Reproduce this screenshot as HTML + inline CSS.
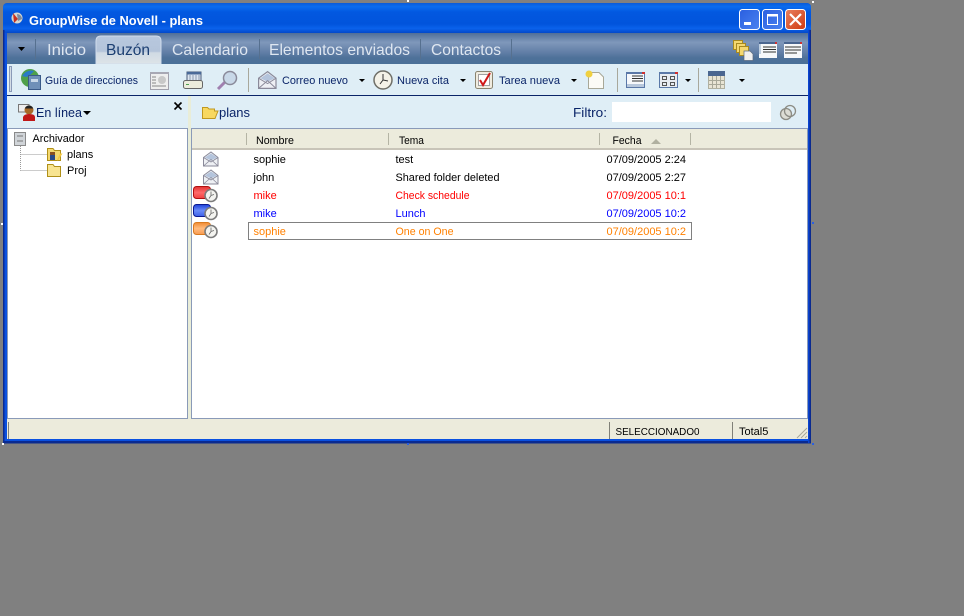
<!DOCTYPE html>
<html><head><meta charset="utf-8"><style>
html,body{margin:0;padding:0;background:#808080;width:964px;height:616px;overflow:hidden}
svg{display:block}
text{font-family:"Liberation Sans",sans-serif;font-size:11px}
</style></head><body>
<svg width="964" height="616" viewBox="0 0 964 616" xmlns="http://www.w3.org/2000/svg">
<defs>
<linearGradient id="tb" x1="0" y1="0" x2="0" y2="1">
<stop offset="0" stop-color="#0a5ad8"/><stop offset=".12" stop-color="#0a6cf0"/><stop offset=".3" stop-color="#0258e0"/><stop offset=".7" stop-color="#0154dc"/><stop offset=".85" stop-color="#0a62ec"/><stop offset="1" stop-color="#0348c8"/>
</linearGradient>
<linearGradient id="tabs" x1="0" y1="0" x2="0" y2="1">
<stop offset="0" stop-color="#4f6e98"/><stop offset=".3" stop-color="#7f98bb"/><stop offset=".6" stop-color="#6480a8"/><stop offset=".8" stop-color="#4e7199"/><stop offset="1" stop-color="#4a7098"/>
</linearGradient>
<linearGradient id="act" x1="0" y1="0" x2="0" y2="1">
<stop offset="0" stop-color="#b8c8de"/><stop offset=".55" stop-color="#b4c4da"/><stop offset=".6" stop-color="#d0dae4"/><stop offset="1" stop-color="#dde4e8"/>
</linearGradient>
<linearGradient id="btn" x1="0" y1="0" x2="1" y2="1"><stop offset="0" stop-color="#2a5fe0"/><stop offset="1" stop-color="#4a82f0"/></linearGradient>
<linearGradient id="cls" x1="0" y1="0" x2="1" y2="1"><stop offset="0" stop-color="#e88060"/><stop offset="1" stop-color="#d03a10"/></linearGradient>
<linearGradient id="red" x1="0" y1="0" x2="0" y2="1"><stop offset="0" stop-color="#e03030"/><stop offset=".5" stop-color="#ff6a6a"/><stop offset="1" stop-color="#f04040"/></linearGradient>
<linearGradient id="blu" x1="0" y1="0" x2="0" y2="1"><stop offset="0" stop-color="#1c40d8"/><stop offset=".5" stop-color="#6a8cf8"/><stop offset="1" stop-color="#3c60e8"/></linearGradient>
<linearGradient id="org" x1="0" y1="0" x2="0" y2="1"><stop offset="0" stop-color="#f08a30"/><stop offset=".5" stop-color="#ffbc80"/><stop offset="1" stop-color="#f89a50"/></linearGradient>
<g id="clock"><circle cx="0" cy="0" r="6" fill="#f4f4f0" stroke="#7c7c7c" stroke-width="1.6"/><path d="M0 -4V0L3 -1M0 0L-2 3" stroke="#666" fill="none" stroke-width=".8"/></g>
<g id="env"><path d="M0.5 6L8 0.5L15 6V14.5H0.5Z" fill="#eef0f4" stroke="#8a8a9a"/><path d="M2 6L8 2L14 6L8 9Z" fill="#b4c4dc"/><path d="M0.5 14.5L8 8L15 14.5M0.5 6L8 10.500L15 6" fill="none" stroke="#8a8a9a" stroke-width=".8"/></g>
<g id="arrow"><path d="M0 0H6L3 3Z" fill="#000"/></g>
</defs>

<rect width="964" height="616" fill="#808080"/>
<!-- window frame -->
<path d="M3 443V8Q3 3 9 3H806Q811 3 811 8V443Z" fill="#0a50e0"/>
<rect x="3" y="3" width="808" height="30" fill="url(#tb)" rx="4"/>
<rect x="3" y="441" width="808" height="2.500" fill="#0a2a90"/>
<rect x="3" y="439" width="808" height="2" fill="#0a50e0"/>
<rect x="808" y="30" width="3" height="413" fill="#0a44d0"/>
<rect x="3" y="30" width="1.500" height="413" fill="#0a2a90"/>
<rect x="809.500" y="30" width="1.500" height="413" fill="#0a2a90"/>
<rect x="2" y="443" width="2" height="2" fill="#fff"/>
<rect x="812" y="443" width="2" height="2" fill="#2a5fe0"/>
<rect x="407" y="443" width="2" height="2" fill="#2a5fe0"/>
<rect x="812" y="222" width="2" height="2" fill="#2a5fe0"/>
<rect x="1" y="223" width="2" height="2" fill="#fff"/>
<rect x="812" y="1" width="2" height="2" fill="#fff"/>
<rect x="407" y="0" width="2" height="2" fill="#fff"/>

<!-- title -->
<circle cx="17" cy="18" r="5.500" fill="#d8d8d0"/><path d="M13 13L18 19L14 23Z" fill="#c83020"/><path d="M17 14a5 5 0 0 1 5 5l-4 2Z" fill="#7a8aa0"/>
<text x="29" y="25" fill="#fff" font-weight="bold" style="font-size:13px" textLength="174" lengthAdjust="spacingAndGlyphs">GroupWise de Novell - plans</text>

<!-- window buttons -->
<rect x="739.500" y="9.500" width="20" height="20" rx="3" fill="url(#btn)" stroke="#fff"/><rect x="744" y="22" width="7" height="3" fill="#fff"/>
<rect x="762.500" y="9.500" width="20" height="20" rx="3" fill="url(#btn)" stroke="#fff"/><rect x="767.500" y="14.500" width="10" height="10" fill="none" stroke="#fff"/><rect x="767" y="14" width="11" height="2.500" fill="#fff"/>
<rect x="785.500" y="9.500" width="20" height="20" rx="3" fill="url(#cls)" stroke="#fff"/><path d="M790 14L801 25M801 14L790 25" stroke="#fff" stroke-width="2.200"/>

<!-- tab bar -->
<rect x="7" y="33" width="801" height="31" fill="url(#tabs)"/>
<path d="M18 47H25L21.500 51Z" fill="#000"/>
<g stroke="#56708f"><path d="M35.500 39V59M259.500 39V59M420.500 39V59M511.500 39V59"/></g>
<path d="M96 64V41Q96 36 101 36H156Q161 36 161 41V64Z" fill="url(#act)" stroke="#d0dcec" stroke-width="1"/>
<g fill="#dfe7f1">
<text x="47" y="55" style="font-size:16px" textLength="39" lengthAdjust="spacingAndGlyphs">Inicio</text>
<text x="106" y="55" style="font-size:16px" fill="#1c3f72" textLength="44" lengthAdjust="spacingAndGlyphs">Buzón</text>
<text x="172" y="55" style="font-size:16px" textLength="76" lengthAdjust="spacingAndGlyphs">Calendario</text>
<text x="269" y="55" style="font-size:16px" textLength="141" lengthAdjust="spacingAndGlyphs">Elementos enviados</text>
<text x="431" y="55" style="font-size:16px" textLength="70" lengthAdjust="spacingAndGlyphs">Contactos</text>
</g>
<!-- tab right icons -->
<g stroke="#a88a20" fill="#f4d870"><rect x="733.500" y="40.500" width="9" height="9"/><rect x="736.500" y="43.500" width="9" height="9"/><rect x="739.500" y="46.500" width="9" height="9"/></g>
<path d="M744 51H750L753 54V60.500H744Z" fill="#f0f0f0" stroke="#5a6a80" stroke-width=".7"/>
<g><rect x="759" y="44" width="18" height="14" fill="#f6f8fa"/><rect x="759" y="42" width="18" height="2" fill="#4a6690"/><rect x="775" y="42" width="2" height="2" fill="#d03030"/><path d="M763 47H776M763 49.500H776M763 52H776" stroke="#333"/><rect x="759" y="44" width="2" height="10" fill="#c0d0e0"/></g>
<g><rect x="784" y="44" width="18" height="14" fill="#f6f8fa"/><rect x="784" y="42" width="18" height="2" fill="#4a6690"/><rect x="800" y="42" width="2" height="2" fill="#d03030"/><path d="M785 47H801M785 50H801M785 53H797" stroke="#333"/></g>

<!-- toolbar and headers -->
<rect x="7" y="64" width="801" height="64" fill="#dfeef6"/>
<rect x="7" y="95" width="801" height="1" fill="#0a2468"/>
<rect x="9.500" y="66.500" width="2" height="25" fill="#d4dde6" stroke="#8a9ab8" stroke-width="1"/>
<!-- address book -->
<circle cx="30" cy="78" r="9" fill="#4fa04a"/><path d="M22 76Q27 69 34 71Q30 76 26 77Z" fill="#2a7ac8"/><rect x="28.500" y="75.500" width="12" height="14" fill="#6f90b8" stroke="#3a5a88"/><rect x="31" y="79" width="7" height="3" fill="#c8d8e8"/>
<text x="45" y="84" fill="#0a2468" textLength="93" lengthAdjust="spacingAndGlyphs">Guía de direcciones</text>
<!-- doc-view -->
<rect x="150.500" y="72.500" width="18" height="17" fill="#eee" stroke="#a0a0ac"/><rect x="150" y="72" width="19" height="2" fill="#a8a8b4"/><path d="M152 77H156M152 80H156M152 83H156M152 86H166" stroke="#888"/><circle cx="162" cy="80" r="4" fill="#c8c8c8"/>
<!-- printer -->
<rect x="187" y="72" width="14" height="9" fill="#dde6f0" stroke="#4a5a78"/><rect x="187" y="72" width="14" height="2.500" fill="#4a6a98"/><path d="M190 75V80M193 75V80M196 75V80M199 75V80" stroke="#8a9ab0"/><rect x="183.500" y="80.500" width="19" height="8" rx="2" fill="#ececdc" stroke="#666"/><rect x="186" y="84" width="3" height="1" fill="#50a050"/>
<!-- magnifier -->
<path d="M218 89L225 82" stroke="#a080b0" stroke-width="3"/><circle cx="230" cy="78" r="6.500" fill="#c8d8e8" stroke="#8a8a9a" stroke-width="1.500"/>
<rect x="248" y="68" width="1" height="24" fill="#a8a89c"/>
<!-- new mail -->
<g transform="translate(258 71) scale(1.2)"><use href="#env"/></g>
<text x="282" y="84" fill="#0a2468" textLength="66" lengthAdjust="spacingAndGlyphs">Correo nuevo</text>
<use href="#arrow" x="359" y="79"/>
<g transform="translate(383 80)"><circle r="9" fill="#f4f2e8" stroke="#6f6f68" stroke-width="1.500"/><path d="M0 -6V0L5 1M0 0L-3 4" stroke="#333" fill="none"/></g>
<text x="397" y="84" fill="#0a2468" textLength="52" lengthAdjust="spacingAndGlyphs">Nueva cita</text>
<use href="#arrow" x="460" y="79"/>
<rect x="475.500" y="71.500" width="17" height="17" rx="2" fill="#f0ece0" stroke="#8a8470"/><rect x="478.500" y="74.500" width="11" height="11" fill="#fff" stroke="#a0a0a0"/><path d="M480 80L483 85L490 73" fill="none" stroke="#d01818" stroke-width="2"/>
<text x="499" y="84" fill="#0a2468" textLength="61" lengthAdjust="spacingAndGlyphs">Tarea nueva</text>
<use href="#arrow" x="571" y="79"/>
<path d="M588.500 72.500H599L603.500 77V88.500H588.500Z" fill="#fbfbf6" stroke="#a8a898"/>
<circle cx="589" cy="74" r="3.500" fill="#f0d040"/>
<rect x="617" y="68" width="1" height="24" fill="#a8a89c"/>
<!-- list view icon -->
<rect x="626.500" y="72.500" width="18" height="15" fill="#f6f8fb" stroke="#5a78a8"/><rect x="626" y="72" width="19" height="2" fill="#5a78a8"/><rect x="642" y="72" width="3" height="2" fill="#d03030"/><path d="M632 76H643M632 78.500H643M632 81H643" stroke="#333"/><rect x="627" y="84" width="17" height="3" fill="#b8c8dc"/>
<!-- panel icon -->
<rect x="659.500" y="72.500" width="18" height="15" fill="#e8ecf2" stroke="#5a78a8"/><rect x="659" y="72" width="19" height="2" fill="#5a78a8"/><rect x="675" y="72" width="3" height="2" fill="#d03030"/><g fill="none" stroke="#555"><rect x="662.500" y="76.500" width="4" height="3"/><rect x="670.500" y="76.500" width="4" height="3"/><rect x="662.500" y="82.500" width="4" height="3"/><rect x="670.500" y="82.500" width="4" height="3"/></g>
<use href="#arrow" x="685" y="79"/>
<rect x="698" y="68" width="1" height="24" fill="#a8a89c"/>
<!-- calendar -->
<rect x="708.500" y="72.500" width="16" height="16" fill="#e8e4d4" stroke="#b0b0a0"/><rect x="708" y="71" width="17" height="5" fill="#4a6690"/><path d="M712.500 76V88M716.500 76V88M720.500 76V88M709 80.500H724M709 84.500H724" stroke="#a8a898"/>
<use href="#arrow" x="739" y="79"/>

<!-- En linea -->
<path d="M18.500 104.500H29V112H18.500Z" fill="#eee" stroke="#777"/>
<circle cx="29" cy="110" r="4.500" fill="#a86a28"/><path d="M29 105.500a4.500 3 0 0 1 4 3h-8a4.500 3 0 0 1 4-3Z" fill="#222"/><path d="M23 121V117Q24 114 29 114Q35 114 35 117V121Z" fill="#c01818"/>
<text x="36" y="117" fill="#0a2468" style="font-size:13px" textLength="46" lengthAdjust="spacingAndGlyphs">En línea</text>
<path d="M83 111H91L87 115Z" fill="#000"/>
<path d="M174.500 102.500L181.500 109.500M181.500 102.500L174.500 109.500" stroke="#000" stroke-width="1.600"/>
<rect x="188" y="96" width="3" height="32" fill="#e9edd8"/>
<path d="M202.500 118.500V107.500H207.500L209 109H214.500V111H218L215 118.500Z" fill="#f8d860" stroke="#c09820"/>
<text x="219" y="117" fill="#0a2468" style="font-size:13px" textLength="31" lengthAdjust="spacingAndGlyphs">plans</text>
<text x="573" y="117" fill="#0a2468" style="font-size:13px" textLength="34" lengthAdjust="spacingAndGlyphs">Filtro:</text>
<rect x="612" y="102" width="159" height="20" fill="#fff"/>
<g fill="none" stroke="#8c8c84" stroke-width="1.300"><circle cx="786" cy="114" r="5.500" fill="#dcdcd4"/><circle cx="790" cy="111" r="5.500"/></g>

<!-- panes -->
<rect x="7" y="128" width="181" height="291" fill="#8a9ab8"/><rect x="8" y="129" width="179" height="289" fill="#fff"/>
<rect x="188" y="128" width="3" height="291" fill="#e9edd8"/>
<rect x="191" y="128" width="617" height="291" fill="#8a9ab8"/><rect x="192" y="129" width="615" height="289" fill="#fff"/>

<!-- tree -->
<rect x="14.500" y="132.500" width="11" height="13" fill="#d0d4d8" stroke="#8a8a8a"/><path d="M17 136H23M17 141H23" stroke="#777"/>
<text x="32.500" y="142" fill="#000" textLength="52" lengthAdjust="spacingAndGlyphs">Archivador</text>
<path d="M20.500 146V170.500M20.500 154.500H47M20.500 170.500H47" stroke="#999" stroke-dasharray="1 1" fill="none"/>
<path d="M47.500 160.500V148.500H53L54.500 150.500H60.500V160.500Z" fill="#f4d870" stroke="#b09018"/><rect x="50" y="152" width="5" height="3" fill="#8a5020"/><rect x="50" y="155" width="5" height="5" fill="#2a4a88"/><path d="M58 160.500L62.500 153.500H60L57 160Z" fill="#f4c840"/>
<text x="67" y="158" fill="#000">plans</text>
<path d="M47.500 176.500V164.500H53L54.500 166.500H60.500V176.500Z" fill="#f8e490" stroke="#b09018"/>
<text x="67" y="174" fill="#000">Proj</text>

<!-- list header -->
<rect x="192" y="129" width="615" height="19" fill="#ecebdc"/>
<rect x="192" y="148" width="615" height="2" fill="#c8c4b8"/>
<g fill="#b4b4a4"><rect x="246" y="133" width="1" height="12"/><rect x="388" y="133" width="1" height="12"/><rect x="599" y="133" width="1" height="12"/><rect x="690" y="133" width="1" height="12"/></g>
<text x="256" y="144" fill="#000" textLength="38" lengthAdjust="spacingAndGlyphs">Nombre</text>
<text x="399" y="144" fill="#000" textLength="25" lengthAdjust="spacingAndGlyphs">Tema</text>
<text x="612.500" y="144" fill="#000" textLength="29" lengthAdjust="spacingAndGlyphs">Fecha</text>
<path d="M651 144L656 139L661 144Z" fill="#b0b0a0"/>

<!-- rows -->
<use href="#env" x="203" y="151.500"/><use href="#env" x="203" y="169.500"/>
<text x="253.500" y="163" fill="#000">sophie</text>
<text x="395.500" y="163" fill="#000">test</text>
<text x="606.500" y="163" fill="#000">07/09/2005 2:24</text>
<text x="253.500" y="181" fill="#000">john</text>
<text x="395.500" y="181" fill="#000" textLength="104" lengthAdjust="spacingAndGlyphs">Shared folder deleted</text>
<text x="606.500" y="181" fill="#000">07/09/2005 2:27</text>

<rect x="193.500" y="186.500" width="17" height="12" rx="3" fill="url(#red)" stroke="#b01010"/><use href="#clock" x="211" y="195.500"/>
<text x="253.500" y="199" fill="#ff0000">mike</text>
<text x="395.500" y="199" fill="#ff0000" textLength="74" lengthAdjust="spacingAndGlyphs">Check schedule</text>
<text x="606.500" y="199" fill="#ff0000">07/09/2005 10:1</text>

<rect x="193.500" y="204.500" width="17" height="12" rx="3" fill="url(#blu)" stroke="#0a1a90"/><use href="#clock" x="211" y="213.500"/>
<text x="253.500" y="217" fill="#0000ff">mike</text>
<text x="395.500" y="217" fill="#0000ff">Lunch</text>
<text x="606.500" y="217" fill="#0000ff">07/09/2005 10:2</text>

<rect x="193.500" y="222.500" width="17" height="12" rx="3" fill="url(#org)" stroke="#d87a20"/><use href="#clock" x="211" y="231.500"/>
<rect x="248.500" y="222.500" width="443" height="17" fill="none" stroke="#000" stroke-dasharray="1 1"/>
<text x="253.500" y="235" fill="#ff8000">sophie</text>
<text x="395.500" y="235" fill="#ff8000" textLength="58" lengthAdjust="spacingAndGlyphs">One on One</text>
<text x="606.500" y="235" fill="#ff8000">07/09/2005 10:2</text>

<!-- status bar -->
<rect x="7" y="419" width="801" height="20" fill="#ecebdc"/>
<rect x="8" y="422" width="1" height="17" fill="#808078"/>
<rect x="609" y="422" width="1" height="17" fill="#808078"/>
<rect x="732" y="422" width="1" height="17" fill="#808078"/>
<text x="615.500" y="435" fill="#000" style="font-size:10.500px" textLength="84" lengthAdjust="spacingAndGlyphs">SELECCIONADO0</text>
<text x="739" y="435" fill="#000">Total5</text>
<path d="M797 438L807 428M801 438L807 432M805 438L807 436" stroke="#a8a898" fill="none"/>
</svg>
</body></html>
